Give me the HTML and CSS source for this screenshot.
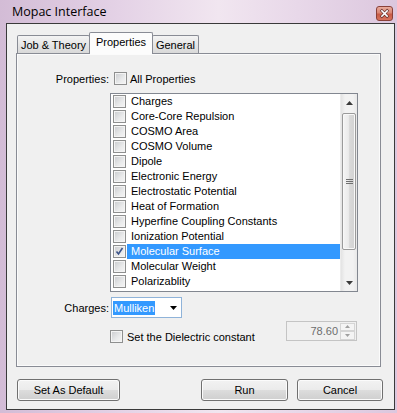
FILE: index.html
```html
<!DOCTYPE html>
<html lang="en">
<head>
  <meta charset="UTF-8" />
  <meta name="viewport" content="width=device-width, initial-scale=1.0"/>
  <title>Mopac Interface</title>
  <link rel="stylesheet" href="styles.css">
</head>
<body>
  <div class="window">
    <div class="titlebar">
      <span class="title">Mopac Interface</span>
      <button class="close-btn" aria-label="Close">
        <svg width="17" height="15" viewBox="0 0 17 15">
          <path d="M5.5 4.5 L11.5 10.5 M11.5 4.5 L5.5 10.5" stroke="#5a2a26" stroke-width="3.2" stroke-linecap="square"/>
          <path d="M5.5 4.5 L11.5 10.5 M11.5 4.5 L5.5 10.5" stroke="#ffffff" stroke-width="1.8" stroke-linecap="square"/>
        </svg>
      </button>
    </div>

    <div class="client">
      <div class="tabs">
        <div class="tab">Job &amp; Theory</div>
        <div class="tab active">Properties</div>
        <div class="tab">General</div>
      </div>

      <div class="tab-page">
        <div class="row props-row">
          <span class="field-label">Properties:</span>
          <label class="check"><span class="box"></span><span class="check-text">All Properties</span></label>
        </div>

        <div class="listbox">
          <ul class="items">
            <li><span class="box"></span><span class="item-text">Charges</span></li>
            <li><span class="box"></span><span class="item-text">Core-Core Repulsion</span></li>
            <li><span class="box"></span><span class="item-text">COSMO Area</span></li>
            <li><span class="box"></span><span class="item-text">COSMO Volume</span></li>
            <li><span class="box"></span><span class="item-text">Dipole</span></li>
            <li><span class="box"></span><span class="item-text">Electronic Energy</span></li>
            <li><span class="box"></span><span class="item-text">Electrostatic Potential</span></li>
            <li><span class="box"></span><span class="item-text">Heat of Formation</span></li>
            <li><span class="box"></span><span class="item-text">Hyperfine Coupling Constants</span></li>
            <li><span class="box"></span><span class="item-text">Ionization Potential</span></li>
            <li class="selected">
              <span class="box checked">
                <svg width="11" height="11" viewBox="0 0 11 11"><path d="M2.5 5.5 L4.5 8 L8.5 2" fill="none" stroke="#3d5489" stroke-width="1.6"/></svg>
              </span>
              <span class="item-text">Molecular Surface</span>
            </li>
            <li><span class="box"></span><span class="item-text">Molecular Weight</span></li>
            <li><span class="box"></span><span class="item-text">Polarizablity</span></li>
          </ul>
          <div class="scrollbar">
            <div class="sb-btn">
              <svg width="7" height="4" viewBox="0 0 7 4"><path d="M0 4 L3.5 0 L7 4 Z" fill="#3a3a3a"/></svg>
            </div>
            <div class="sb-track">
              <div class="sb-thumb">
                <span class="grip"></span>
              </div>
            </div>
            <div class="sb-btn">
              <svg width="7" height="4" viewBox="0 0 7 4"><path d="M0 0 L7 0 L3.5 4 Z" fill="#3a3a3a"/></svg>
            </div>
          </div>
        </div>

        <div class="row charges-row">
          <span class="field-label">Charges:</span>
          <div class="combo">
            <span class="combo-value">Mulliken</span>
            <svg class="combo-arrow" width="7" height="4" viewBox="0 0 7 4"><path d="M0 0 L7 0 L3.5 4 Z" fill="#000"/></svg>
          </div>
        </div>

        <div class="row dielectric-row">
          <label class="check dielectric"><span class="box"></span><span class="check-text">Set the Dielectric constant</span></label>
          <div class="spinbox">
            <span class="spin-value">78.60</span>
            <div class="spin-btns">
              <span class="spin-btn"><svg width="5" height="3" viewBox="0 0 5 3"><path d="M0 3 L2.5 0 L5 3 Z" fill="#a0a0a0"/></svg></span>
              <span class="spin-btn"><svg width="5" height="3" viewBox="0 0 5 3"><path d="M0 0 L5 0 L2.5 3 Z" fill="#a0a0a0"/></svg></span>
            </div>
          </div>
        </div>
      </div>

      <div class="button-row">
        <button class="btn btn-default">Set As Default</button>
        <button class="btn btn-run">Run</button>
        <button class="btn btn-cancel">Cancel</button>
      </div>
    </div>
  </div>
</body>
</html>
```

FILE: styles.css
```css
body {
  margin: 0;
  width: 397px;
  height: 413px;
  overflow: hidden;
  font-family: 'Liberation Sans', Arial, sans-serif;
  font-size: 11px;
  color: #000;
}

.window {
  display: flex;
  flex-direction: column;
  width: 397px;
  height: 413px;
  background:
    linear-gradient(90deg, #d3bcd6 0%, #e4d2e6 30%, #f1e6f0 55%, #e8d8e9 75%, #dcc7de 100%);
}

.titlebar {
  display: flex;
  align-items: flex-start;
  height: 23px;
  padding-left: 12px;
}

.title {
  font-family: 'Open Sans', 'Liberation Sans', sans-serif;
  font-size: 12.5px;
  line-height: 23px;
  color: #000;
}

.close-btn {
  margin: 6px 4px 0 auto;
  width: 17px;
  height: 15px;
  padding: 0;
  border: 1px solid #8a4038;
  border-radius: 3px;
  background: linear-gradient(#e9aa9c 0%, #d98573 45%, #c75a45 55%, #d8735c 100%);
  display: flex;
  align-items: center;
  justify-content: center;
  box-sizing: border-box;
}

.close-btn svg {
  display: block;
  margin-top: -1px;
}

.client {
  display: flex;
  flex-direction: column;
  margin: 0 2px 3px 6px;
  height: 385px;
  border: 1px solid #3a3a3a;
  background: #f0f0f0;
}

/* tab strip */
.tabs {
  display: flex;
  align-items: flex-end;
  height: 29px;
  padding-left: 10px;
}

.tab {
  box-sizing: border-box;
  height: 18px;
  border: 1px solid #898c95;
  border-bottom: none;
  border-radius: 2px 2px 0 0;
  background: linear-gradient(#f4f4f4, #e6e6e6 50%, #d9d9d9);
  text-align: center;
  line-height: 18px;
}

.tab:nth-child(1) {
  width: 73px;
}

.tab:nth-child(2) {
  width: 64px;
  margin-left: -1px;
}

.tab:nth-child(3) {
  width: 47px;
  margin-left: -1px;
}

.tab.active {
  position: relative;
  z-index: 1;
  height: 22px;
  margin-bottom: -1px;
  background: #fcfcfc;
  line-height: 19px;
}

/* tab page */
.tab-page {
  box-sizing: border-box;
  width: 365px;
  height: 314px;
  margin-left: 9px;
  border: 1px solid #898c95;
  box-shadow: inset 0 0 0 1px #fbfbfb;
  background: #f0f0f0;
}

.row {
  display: flex;
  align-items: center;
}

.field-label {
  width: 92px;
  text-align: right;
}

.props-row {
  height: 13px;
  margin-top: 18px;
}

.check {
  display: flex;
  align-items: center;
}

.props-row .check {
  margin-left: 5px;
}

.check-text {
  margin-left: 3px;
}

.box {
  box-sizing: border-box;
  display: flex;
  align-items: center;
  justify-content: center;
  width: 13px;
  height: 13px;
  flex: none;
  border: 1px solid #8e8f8f;
  box-shadow: inset 0 0 0 1px #f4f4f4;
  background: linear-gradient(135deg, #c9cbce, #e9eaeb 60%, #f5f5f5);
}

/* list box */
.listbox {
  box-sizing: border-box;
  display: flex;
  width: 248px;
  height: 199px;
  margin: 8px 0 0 93px;
  border: 1px solid #828790;
  background: #fff;
}

.items {
  list-style: none;
  margin: 0;
  padding: 0;
  flex: 1;
}

.items li {
  display: flex;
  align-items: center;
  height: 15px;
  padding-left: 2px;
}

.item-text {
  flex: 1;
  margin-left: 1px;
  padding-left: 4px;
  line-height: 15px;
  white-space: nowrap;
}

.selected .item-text {
  background: #3399ff;
  color: #fff;
}

.scrollbar {
  display: flex;
  flex-direction: column;
  width: 17px;
  background: linear-gradient(90deg, #e3e3e3, #f2f2f2 25%, #f2f2f2 75%, #e8e8e8);
  border-left: 1px solid #ececec;
  box-sizing: border-box;
}

.sb-btn {
  height: 17px;
  display: flex;
  align-items: center;
  justify-content: center;
}

.sb-track {
  flex: 1;
  padding: 2px 1px 0 1px;
}

.sb-thumb {
  box-sizing: border-box;
  height: 137px;
  border: 1px solid #9a9a9a;
  border-radius: 2px;
  background: linear-gradient(90deg, #f4f4f4, #ebebeb 45%, #d9d9d9 55%, #d2d2d2);
  box-shadow: inset 0 0 0 1px #f8f8f8;
  display: flex;
  align-items: center;
  justify-content: center;
}

.grip {
  width: 7px;
  height: 5px;
  background: repeating-linear-gradient(#6f6f6f 0 1px, transparent 1px 2px);
}

/* charges combo */
.charges-row {
  height: 21px;
  margin-top: 5px;
}

.combo {
  box-sizing: border-box;
  display: flex;
  align-items: center;
  width: 71px;
  height: 21px;
  margin-left: 2px;
  border: 1px solid #8fb3d9;
  background: #fff;
  padding-left: 1px;
}

.combo-value {
  background: #3399ff;
  color: #fff;
  line-height: 14px;
  padding: 0 1px;
}

.combo-arrow {
  margin-left: auto;
  margin-right: 4px;
}

/* dielectric row */
.dielectric-row {
  align-items: flex-start;
  height: 20px;
  margin-top: 3px;
}

.dielectric {
  margin: 9px 0 0 93px;
}

.dielectric .check-text {
  margin-left: 4px;
}

.spinbox {
  box-sizing: border-box;
  display: flex;
  align-items: center;
  width: 71px;
  height: 20px;
  margin: 0 23px 0 auto;
  border: 1px solid #c4c4c4;
  background: #f0f0f0;
  color: #6d6d6d;
}

.spin-value {
  flex: 1;
  text-align: right;
  padding-right: 2px;
}

.spin-btns {
  display: flex;
  flex-direction: column;
  width: 15px;
  height: 17px;
  margin-right: 1px;
}

.spin-btn {
  box-sizing: border-box;
  flex: 1;
  display: flex;
  align-items: center;
  justify-content: center;
  border: 1px solid #d5d5d5;
  background: #f4f4f4;
}

/* bottom buttons */
.button-row {
  display: flex;
  margin-top: 12px;
  padding: 0 11px 0 10px;
}

.btn {
  box-sizing: border-box;
  height: 22px;
  padding: 0;
  border: 1px solid #707070;
  border-radius: 3px;
  background: linear-gradient(#f2f2f2 0%, #ebebeb 49%, #dddddd 50%, #cfcfcf 100%);
  box-shadow: inset 0 0 0 1px #fbfbfb;
  font-family: 'Liberation Sans', Arial, sans-serif;
  font-size: 11px;
  color: #000;
}

.btn-default {
  width: 103px;
}

.btn-run {
  width: 87px;
  margin-left: auto;
}

.btn-cancel {
  width: 86px;
  margin-left: 9px;
}
```
